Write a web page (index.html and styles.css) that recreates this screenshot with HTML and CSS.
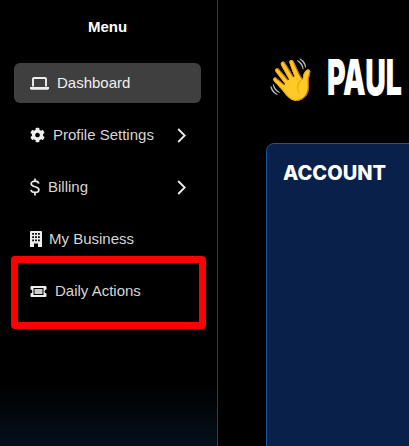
FILE: index.html
```html
<!DOCTYPE html>
<html lang="en">
<head>
    <meta charset="UTF-8">
    <meta name="viewport" content="width=device-width, initial-scale=1.0">
    <title>Dashboard</title>
    <link rel="stylesheet" href="styles.css">
</head>
<body>
    <aside class="sidebar">
        <div class="menu-title">Menu</div>
        <nav class="menu">
            <a class="menu-item active">
                <svg class="icon icon-laptop" viewBox="0 0 19 13"><path d="M3 9.500V2a1 1 0 0 1 1-1h11a1 1 0 0 1 1 1v7.500" fill="none" stroke="currentColor" stroke-width="1.900"/><path d="M0 10h19v1.300a1.400 1.400 0 0 1-1.400 1.400H1.400A1.400 1.400 0 0 1 0 11.300z" fill="currentColor"/></svg>
                <span>Dashboard</span>
            </a>
            <a class="menu-item">
                <svg class="icon icon-gear" viewBox="0 0 512 512"><path fill="currentColor" d="M487.4 315.7l-42.6-24.6c4.3-23.2 4.3-47 0-70.2l42.6-24.6c4.9-2.8 7.1-8.6 5.5-14-11.1-35.6-30-67.8-54.7-94.6-3.8-4.1-10-5.1-14.8-2.3L380.8 110c-17.9-15.4-38.5-27.3-60.8-35.1V25.8c0-5.6-3.9-10.5-9.4-11.7-36.7-8.2-74.3-7.8-109.2 0-5.5 1.2-9.4 6.1-9.4 11.7V75c-22.2 7.9-42.8 19.8-60.8 35.1L88.7 85.5c-4.9-2.8-11-1.9-14.8 2.3-24.7 26.7-43.6 58.9-54.7 94.6-1.7 5.4.6 11.2 5.5 14L67.3 221c-4.3 23.2-4.3 47 0 70.2l-42.6 24.6c-4.9 2.8-7.1 8.6-5.5 14 11.1 35.6 30 67.8 54.7 94.6 3.8 4.1 10 5.1 14.8 2.3l42.6-24.6c17.9 15.4 38.5 27.3 60.8 35.1v49.2c0 5.6 3.9 10.5 9.4 11.7 36.7 8.2 74.3 7.8 109.2 0 5.5-1.2 9.4-6.1 9.4-11.7v-49.2c22.2-7.9 42.8-19.8 60.8-35.1l42.6 24.6c4.9 2.8 11 1.9 14.8-2.3 24.7-26.7 43.6-58.9 54.7-94.6 1.5-5.5-.7-11.3-5.6-14.1zM256 336c-44.1 0-80-35.9-80-80s35.9-80 80-80 80 35.9 80 80-35.9 80-80 80z"/></svg>
                <span>Profile Settings</span>
                <svg class="chevron" viewBox="0 0 9 15"><path d="M1.200 1l6.500 6.500L1.200 14" fill="none" stroke="currentColor" stroke-width="1.800"/></svg>
            </a>
            <a class="menu-item">
                <svg class="icon icon-dollar" viewBox="0 0 10 18"><path d="M8.800 5.600C8.400 4 7 3.200 5 3.200 2.800 3.200 1.200 4.200 1.200 5.800c0 1.700 1.600 2.300 3.800 2.900 2.300.6 3.900 1.300 3.900 3 0 1.700-1.700 2.700-3.900 2.700-2.200 0-3.700-.9-4-2.600" fill="none" stroke="currentColor" stroke-width="1.700"/><path d="M5 .5v3M5 14.500v3" stroke="currentColor" stroke-width="1.700"/></svg>
                <span>Billing</span>
                <svg class="chevron" viewBox="0 0 9 15"><path d="M1.200 1l6.500 6.500L1.200 14" fill="none" stroke="currentColor" stroke-width="1.800"/></svg>
            </a>
            <a class="menu-item">
                <svg class="icon icon-building" viewBox="0 0 12 16"><path fill="currentColor" fill-rule="evenodd" d="M1 0h10a1 1 0 0 1 1 1v15H8v-3.500H4V16H0V1a1 1 0 0 1 1-1zM2.200 2v1.800H4V2zM5.100 2v1.800h1.800V2zM8 2v1.800h1.800V2zM2.200 5.200V7H4V5.200zM5.100 5.200V7h1.800V5.200zM8 5.200V7h1.800V5.200zM2.200 8.400v1.800H4V8.400zM5.100 8.400v1.800h1.800V8.400zM8 8.400v1.800h1.800V8.400z"/></svg>
                <span>My Business</span>
            </a>
            <a class="menu-item">
                <svg class="icon icon-ticket" viewBox="0 0 17 13"><path fill="currentColor" fill-rule="evenodd" d="M1.500 1h14a1 1 0 0 1 1 1v2.600a1.900 1.900 0 0 0 0 3.800V11a1 1 0 0 1-1 1h-14a1 1 0 0 1-1-1V8.400a1.900 1.900 0 0 0 0-3.800V2a1 1 0 0 1 1-1zM3.500 3v7h10V3z"/><path fill="#ccc" d="M4.500 4h8v5h-8z"/></svg>
                <span>Daily Actions</span>
            </a>
        </nav>
        <div class="highlight"></div>
    </aside>
    <main class="content">
        <h1 class="greeting"><span class="wave">👋</span><span class="name">PAUL</span></h1>
        <section class="card">
            <h2>ACCOUNT</h2>
        </section>
    </main>
</body>
</html>
```

FILE: styles.css
```css
* { margin: 0; padding: 0; box-sizing: border-box; }
html, body { height: 100%; }
body { background-color: #000; display: flex; overflow: hidden; font-family: 'Liberation Sans', Arial, sans-serif; color: #fff; }

.sidebar { position: relative; flex: 0 0 218px; height: 446px; padding: 18px 16px 0 14px; border-right: 1px solid #3a3a3a; background: linear-gradient(to bottom, #000 385px, #04101b 446px); }
.menu-title { font-size: 15px; font-weight: 700; line-height: 18px; text-align: center; margin-bottom: 27px; }
.menu { display: flex; flex-direction: column; gap: 12px; }
.menu-item { display: flex; align-items: center; gap: 8px; height: 40px; padding: 0 15px 0 16px; border-radius: 6px; font-size: 15px; color: #d6d6d6; }
.menu-item span { padding-bottom: 2px; }
.menu-item.active { background-color: #3f3f3f; color: #f0f0f0; }
.icon { flex: none; color: #eee; }
.icon-laptop { width: 19px; height: 13px; }
.icon-gear { width: 15px; height: 16px; }
.icon-dollar { width: 10px; height: 18px; }
.icon-building { width: 12px; height: 16px; margin-right: -1px; }
.icon-ticket { width: 17px; height: 13px; }
.chevron { width: 9px; height: 15px; margin-left: auto; color: #eee; }
.highlight { position: absolute; left: 11px; top: 256px; width: 195px; height: 73px; border: 7px solid #f00; border-radius: 4px; }

.content { flex: 1; min-width: 0; padding: 57px 0 0 48px; }
.greeting { display: flex; align-items: center; gap: 10px; height: 46px; margin-bottom: 40px; white-space: nowrap; }
.wave { font-family: 'Noto Color Emoji', sans-serif; font-size: 41px; font-weight: 400; line-height: 46px; }
.name { font-family: Inter, 'Liberation Sans', sans-serif; font-size: 50px; font-weight: 900; line-height: 46px; margin-bottom: 6px; transform: scaleX(0.57); transform-origin: left center; }
.card { width: 260px; height: 320px; padding: 16px; background-color: #08204a; border: 1px solid #1a55a5; border-radius: 8px; }
.card h2 { font-family: Inter, 'Open Sans', sans-serif; font-size: 20px; font-weight: 800; line-height: 26px; }
```
